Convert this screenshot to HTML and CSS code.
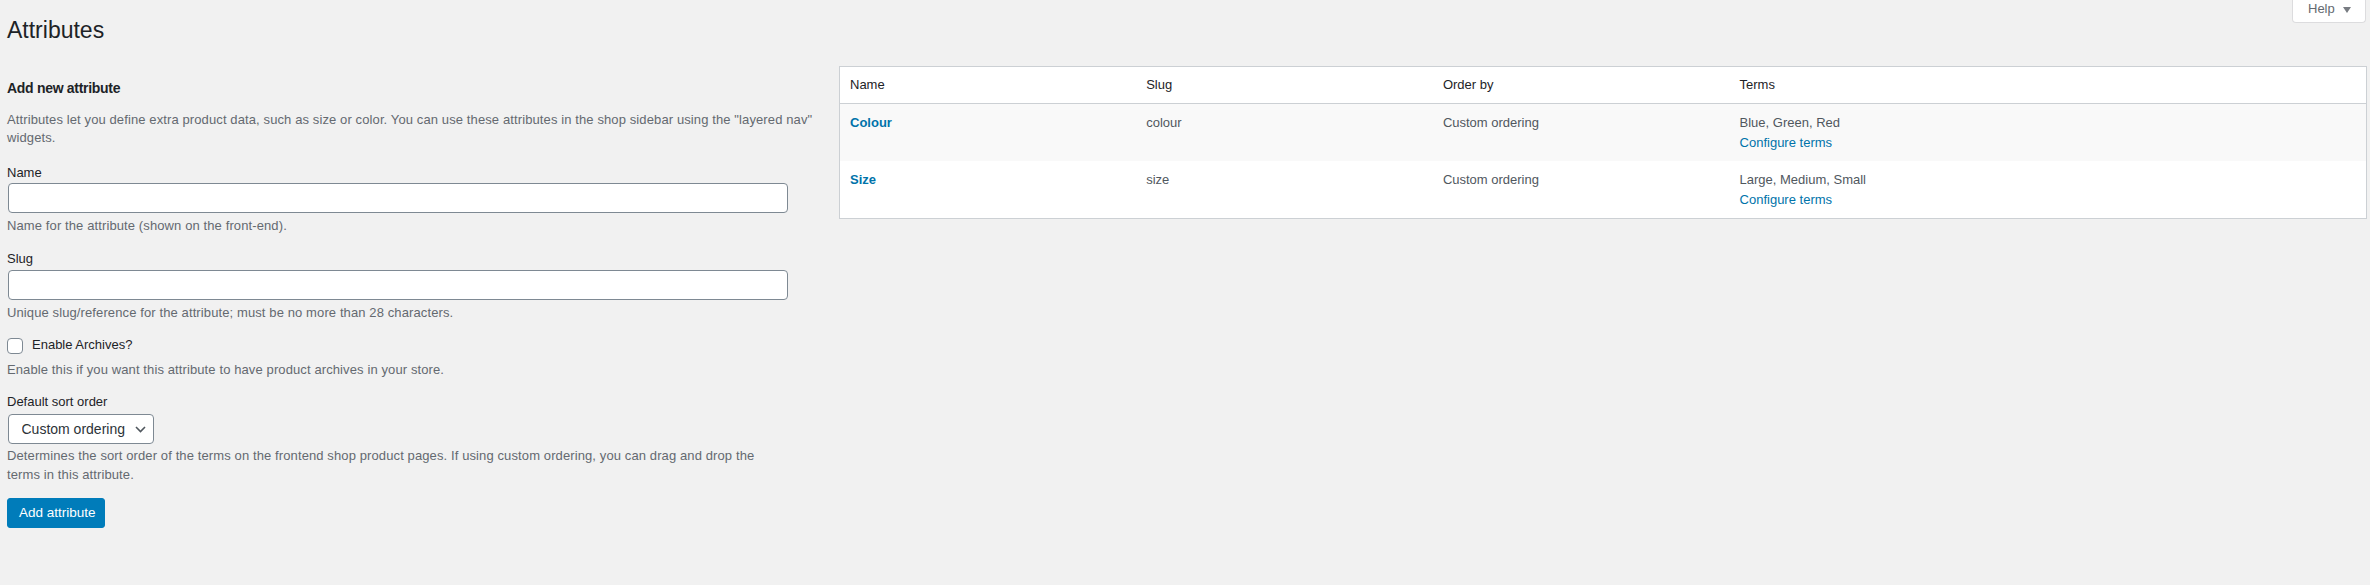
FILE: index.html
```html
<!DOCTYPE html>
<html lang="en">
<head>
<meta charset="utf-8">
<title>Attributes</title>
<link rel="stylesheet" href="styles.css">
</head>
<body>
<div class="wrap">
  <button class="help-tab" type="button">Help <svg class="help-caret" width="8" height="6" viewBox="0 0 8 6"><path d="M0 0H8L4 6Z" fill="#787c82"/></svg></button>
  <h1 class="page-title">Attributes</h1>
  <div class="cols">
    <div class="col-left">
      <h2 class="form-title">Add new attribute</h2>
      <p class="intro">Attributes let you define extra product data, such as size or color. You can use these attributes in the shop sidebar using the "layered nav" widgets.</p>

      <div class="field">
        <label class="field-label">Name</label>
        <input class="text-input" type="text">
        <p class="desc">Name for the attribute (shown on the front-end).</p>
      </div>

      <div class="field">
        <label class="field-label">Slug</label>
        <input class="text-input" type="text">
        <p class="desc">Unique slug/reference for the attribute; must be no more than 28 characters.</p>
      </div>

      <div class="field field-check">
        <label class="check-row"><input class="checkbox" type="checkbox"><span>Enable Archives?</span></label>
        <p class="desc desc-check">Enable this if you want this attribute to have product archives in your store.</p>
      </div>

      <div class="field">
        <label class="field-label">Default sort order</label>
        <span class="select-wrap">
          <select class="select">
            <option>Custom ordering</option>
          </select>
          <svg class="select-chevron" width="11" height="7" viewBox="0 0 11 7"><path d="M1 1L5.5 5.5L10 1" fill="none" stroke="#50575e" stroke-width="1.6"/></svg>
        </span>
        <p class="desc desc-sort">Determines the sort order of the terms on the frontend shop product pages. If using custom ordering, you can drag and drop the terms in this attribute.</p>
      </div>

      <button class="primary-btn" type="button">Add attribute</button>
    </div>

    <div class="col-right">
      <table class="attr-table">
        <colgroup>
          <col class="c-fixed"><col class="c-fixed"><col class="c-fixed"><col>
        </colgroup>
        <thead>
          <tr><th>Name</th><th>Slug</th><th>Order by</th><th>Terms</th></tr>
        </thead>
        <tbody>
          <tr class="alt">
            <td><a class="name-link" href="#">Colour</a></td>
            <td>colour</td>
            <td>Custom ordering</td>
            <td>Blue, Green, Red<br><a class="term-link" href="#">Configure terms</a></td>
          </tr>
          <tr>
            <td><a class="name-link" href="#">Size</a></td>
            <td>size</td>
            <td>Custom ordering</td>
            <td>Large, Medium, Small<br><a class="term-link" href="#">Configure terms</a></td>
          </tr>
        </tbody>
      </table>
    </div>
  </div>
</div>
</body>
</html>
```

FILE: styles.css
```css
html, body {
  margin: 0;
  padding: 0;
  background: #f1f1f1;
}
body {
  font-family: "Liberation Sans", Arial, sans-serif;
  font-size: 13px;
  color: #3c434a;
}
.wrap {
  position: relative;
  padding: 15px 3px 0 7px;
  height: 570px;
}
.help-tab {
  position: absolute;
  top: 0;
  right: 4px;
  width: 74px;
  height: 23px;
  box-sizing: border-box;
  margin: 0;
  padding: 0 0 4px 15px;
  background: #fff;
  border: 1px solid #dcdcde;
  border-top: none;
  border-radius: 0 0 4px 4px;
  font-family: inherit;
  font-size: 13px;
  line-height: 18px;
  color: #646970;
  text-align: left;
  display: flex;
  align-items: center;
  gap: 8px;
}
.help-caret {
  display: block;
  margin-top: 1px;
}
.page-title {
  margin: 0;
  font-size: 23px;
  font-weight: 400;
  line-height: 30px;
  color: #1d2327;
}
.cols {
  display: flex;
}
.col-left {
  width: 832px;
  flex: none;
}
.col-right {
  flex: 1;
  padding-top: 21px;
}
.form-title {
  margin: 33px 0 0;
  font-size: 14px;
  font-weight: 700;
  letter-spacing: -0.3px;
  line-height: 20px;
  color: #1d2327;
}
.intro {
  margin: 12.6px 0 0;
  width: 820px;
  line-height: 18.4px;
  letter-spacing: 0.11px;
  color: #646970;
}
.field {
  margin-top: 16.4px;
  display: flex;
  flex-direction: column;
  align-items: flex-start;
}
.field + .field {
  margin-top: 14.6px;
}
.field-label {
  display: block;
  line-height: 18px;
  color: #1d2327;
}
.text-input {
  display: block;
  box-sizing: border-box;
  width: 780px;
  height: 30px;
  margin: 1.5px 0 0 1px;
  padding: 0 8px;
  border: 1px solid #7e8993;
  border-radius: 4px;
  background: #fff;
  font-family: inherit;
  font-size: 14px;
}
.desc {
  margin: 4.2px 0 0;
  width: 780px;
  line-height: 18.4px;
  letter-spacing: 0.11px;
  color: #646970;
}
.field-check {
  margin-top: 13.4px;
}
.field + .field-check {
  margin-top: 13.4px;
}
.check-row {
  display: flex;
  align-items: flex-start;
  gap: 9px;
  line-height: 18px;
  color: #1d2327;
}
.checkbox {
  appearance: none;
  -webkit-appearance: none;
  box-sizing: border-box;
  width: 16px;
  height: 16px;
  margin: 2.5px 0 0 0;
  border: 1px solid #7e8993;
  border-radius: 4px;
  background: #fff;
  flex: none;
}
.desc-check {
  margin-top: 6.3px;
}
.field-check + .field {
  margin-top: 14.3px;
}
.select-wrap {
  position: relative;
  display: block;
  margin: 2.8px 0 0 1px;
}
.select {
  appearance: none;
  -webkit-appearance: none;
  display: block;
  box-sizing: border-box;
  width: 146px;
  height: 30px;
  margin: 0;
  padding: 0 24px 0 12.5px;
  border: 1px solid #7e8993;
  border-radius: 4px;
  background: #fff;
  font-family: inherit;
  font-size: 14px;
  color: #2c3338;
}
.select-chevron {
  position: absolute;
  left: 127px;
  top: 12px;
  pointer-events: none;
}
.desc-sort {
  margin-top: 3.2px;
  width: 772px;
}
.primary-btn {
  display: block;
  box-sizing: border-box;
  margin: 14px 0 0;
  width: 98px;
  height: 30px;
  padding: 0 0 0 11px;
  text-align: left;
  border: 1px solid #007cba;
  border-radius: 3px;
  background: #007cba;
  color: #fff;
  font-family: inherit;
  font-size: 13.5px;
  line-height: 28px;
}
.attr-table {
  width: 100%;
  border-collapse: collapse;
  border: 1px solid #ccd0d4;
  background: #fff;
  table-layout: fixed;
}
.c-fixed {
  width: 296.7px;
}
.attr-table th {
  padding: 8px 10px;
  line-height: 20px;
  font-weight: 400;
  text-align: left;
  color: #1d2327;
  border-bottom: 1px solid #ccd0d4;
}
.attr-table td {
  padding: 8.5px 10px;
  line-height: 20px;
  vertical-align: top;
  color: #50575e;
}
.attr-table tr.alt td {
  background: #f9f9f9;
}
.name-link {
  color: #0073aa;
  font-weight: 700;
  text-decoration: none;
}
.term-link {
  color: #0073aa;
  text-decoration: none;
}
```
